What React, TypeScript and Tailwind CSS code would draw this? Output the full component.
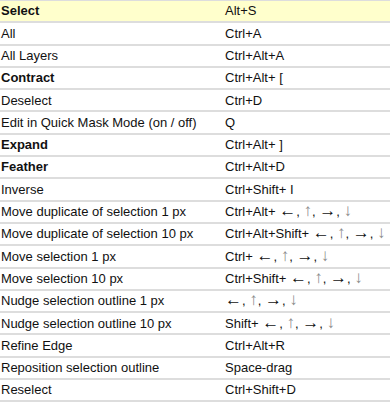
const rows: { cmd: string; keys: string; bold?: boolean; arrows?: string }[] = [
  { cmd: 'All', keys: 'Ctrl+A' },
  { cmd: 'All Layers', keys: 'Ctrl+Alt+A' },
  { cmd: 'Contract', keys: 'Ctrl+Alt+ [', bold: true },
  { cmd: 'Deselect', keys: 'Ctrl+D' },
  { cmd: 'Edit in Quick Mask Mode (on / off)', keys: 'Q' },
  { cmd: 'Expand', keys: 'Ctrl+Alt+ ]', bold: true },
  { cmd: 'Feather', keys: 'Ctrl+Alt+D', bold: true },
  { cmd: 'Inverse', keys: 'Ctrl+Shift+ I' },
  { cmd: 'Move duplicate of selection 1 px', keys: '', arrows: 'Ctrl+Alt+ ' },
  { cmd: 'Move duplicate of selection 10 px', keys: '', arrows: 'Ctrl+Alt+Shift+ ' },
  { cmd: 'Move selection 1 px', keys: '', arrows: 'Ctrl+ ' },
  { cmd: 'Move selection 10 px', keys: '', arrows: 'Ctrl+Shift+ ' },
  { cmd: 'Nudge selection outline 1 px', keys: '', arrows: '' },
  { cmd: 'Nudge selection outline 10 px', keys: '', arrows: 'Shift+ ' },
  { cmd: 'Refine Edge', keys: 'Ctrl+Alt+R' },
  { cmd: 'Reposition selection outline', keys: 'Space-drag' },
  { cmd: 'Reselect', keys: 'Ctrl+Shift+D' },
];

// arrow glyphs are long and thin in the original
function Arrows({ prefix }: { prefix: string }) {
  const arrow = 'text-[17px] leading-[0]';
  return (
    <span>
      {prefix}
      <span className={arrow}>←</span>, <span className={`${arrow} text-[#8c8c8c]`}>↑</span>,{' '}
      <span className={arrow}>→</span>, <span className={`${arrow} text-[#8c8c8c]`}>↓</span>
    </span>
  );
}

export default function App() {
  return (
    <div className="w-[390px] h-[402px] overflow-hidden bg-white text-[13px] text-[#111] font-['Liberation_Sans',Arial,sans-serif] border-t border-[#dddddd]">
      {/* Header */}
      <div className="flex items-center h-[22.3px] bg-[#ffffcc] border-b-2 border-[#dddddd] font-bold">
        <div className="w-[225px] pl-px">Select</div>
        <div className="font-normal">Alt+S</div>
      </div>

      {rows.map((r) => (
        <div key={r.cmd} className="flex items-center h-[22.3px] border-b-2 border-[#dddddd]">
          <div className={`w-[225px] pl-px ${r.bold ? 'font-bold' : ''}`}>{r.cmd}</div>
          <div className="whitespace-nowrap">
            {r.arrows !== undefined ? <Arrows prefix={r.arrows} /> : r.keys}
          </div>
        </div>
      ))}
    </div>
  );
}
